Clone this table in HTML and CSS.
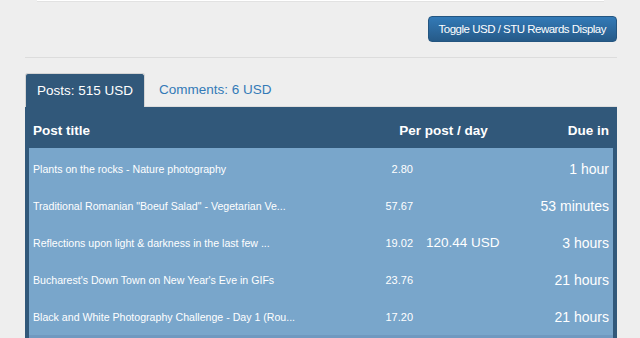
FILE: index.html
```html
<!DOCTYPE html>
<html lang="en">
<head>
    <meta charset="UTF-8">
    <meta name="viewport" content="width=device-width, initial-scale=1.0">
    <title>Pending rewards</title>
    <link rel="stylesheet" href="styles.css">
</head>
<body>
    <div class="wrap">
        <!-- bottom edge of the card above -->
        <div class="card-edge"></div>

        <div class="toolbar">
            <button class="btn-toggle" onclick="toggleCurrency()">Toggle USD / STU Rewards Display</button>
        </div>
        <hr class="divider">

        <!-- tabs -->
        <ul class="tabs">
            <li class="tab active">Posts: 515 USD</li>
            <li class="tab">Comments: 6 USD</li>
        </ul>

        <div class="panel">
            <div class="grid head">
                <div>Post title</div>
                <div class="per-day">Per post / day</div>
                <div class="due">Due in</div>
            </div>
            <div class="rows">
                <div class="grid row">
                    <div class="title">Plants on the rocks - Nature photography</div>
                    <div class="num">2.80</div>
                    <div class="total"></div>
                    <div class="due">1 hour</div>
                </div>
                <div class="grid row">
                    <div class="title">Traditional Romanian "Boeuf Salad" - Vegetarian Ve...</div>
                    <div class="num">57.67</div>
                    <div class="total"></div>
                    <div class="due">53 minutes</div>
                </div>
                <div class="grid row">
                    <div class="title">Reflections upon light &amp; darkness in the last few ...</div>
                    <div class="num">19.02</div>
                    <div class="total">120.44 USD</div>
                    <div class="due">3 hours</div>
                </div>
                <div class="grid row">
                    <div class="title">Bucharest's Down Town on New Year's Eve in GIFs</div>
                    <div class="num">23.76</div>
                    <div class="total"></div>
                    <div class="due">21 hours</div>
                </div>
                <div class="grid row">
                    <div class="title">Black and White Photography Challenge - Day 1 (Rou...</div>
                    <div class="num">17.20</div>
                    <div class="total"></div>
                    <div class="due">21 hours</div>
                </div>
                <div class="grid row next">
                    <div class="title">&nbsp;</div>
                    <div class="num"></div>
                    <div class="total"></div>
                    <div class="due"></div>
                </div>
            </div>
        </div>
    </div>

    <script>
        let showUsd = true;
        function toggleCurrency() {
            showUsd = !showUsd;
        }
    </script>
</body>
</html>
```

FILE: styles.css
```css
* {
    box-sizing: border-box;
    margin: 0;
    padding: 0;
}

body {
    font-family: "Liberation Sans", Arial, Helvetica, sans-serif;
    background: #eeeeee;
    color: #333;
    height: 338px;
    overflow: hidden;
}

.wrap {
    width: 592px;
    margin-left: 25px;
}

/* card above */
.card-edge {
    height: 2px;
    margin: 0 13px 0 12px;
    background: #fff;
    border-bottom: 1px solid #e2e2e2;
}

.toolbar {
    display: flex;
    justify-content: flex-end;
    padding-top: 14px;
}

.btn-toggle {
    height: 26px;
    padding: 0 10px;
    font-family: inherit;
    font-size: 11.5px;
    letter-spacing: -0.5px;
    line-height: 24px;
    color: #fff;
    background: linear-gradient(#337ab7, #265a88);
    border: 1px solid #245580;
    border-radius: 4px;
    cursor: pointer;
}

.divider {
    border: none;
    border-top: 1px solid #dcdcdc;
    margin-top: 15px;
}

/* tabs */
.tabs {
    display: flex;
    list-style: none;
    margin-top: 15px;
    border-bottom: 1px solid #dddddd;
}

.tab {
    height: 34px;
    padding: 0 12px;
    margin-right: 2px;
    margin-bottom: -1px;
    font-size: 13.5px;
    line-height: 34px;
    color: #337ab7;
    border-radius: 3px 3px 0 0;
}

.tab.active {
    color: #fff;
    background: #31587a;
    border: 1px solid #d4d4d4;
    border-bottom: none;
    line-height: 33px;
    padding: 0 11px;
}

/* table */
.panel {
    background: #31587a;
    padding: 0 4px;
}

.grid {
    display: grid;
    grid-template-columns: 1fr 50px 106px 90px;
    align-items: center;
    padding: 0 4px;
    color: #fff;
}

.head {
    padding-top: 15px;
    padding-bottom: 8px;
    font-size: 13.5px;
    font-weight: bold;
    line-height: 18px;
}

.head .per-day {
    grid-column: 2 / 4;
    text-align: center;
    padding-left: 5px;
}

.due {
    text-align: right;
    font-size: 14px;
}

.head .due {
    font-size: 13.5px;
}

.rows {
    background: #79a6cb;
    padding-top: 2px;
}

.row {
    height: 37px;
}

.row.next {
    background: #7099c0;
}

.title {
    font-size: 10.6px;
    white-space: nowrap;
    overflow: hidden;
}

.num {
    font-size: 11px;
    text-align: right;
}

.total {
    padding-left: 13px;
    font-size: 13.5px;
}
```
